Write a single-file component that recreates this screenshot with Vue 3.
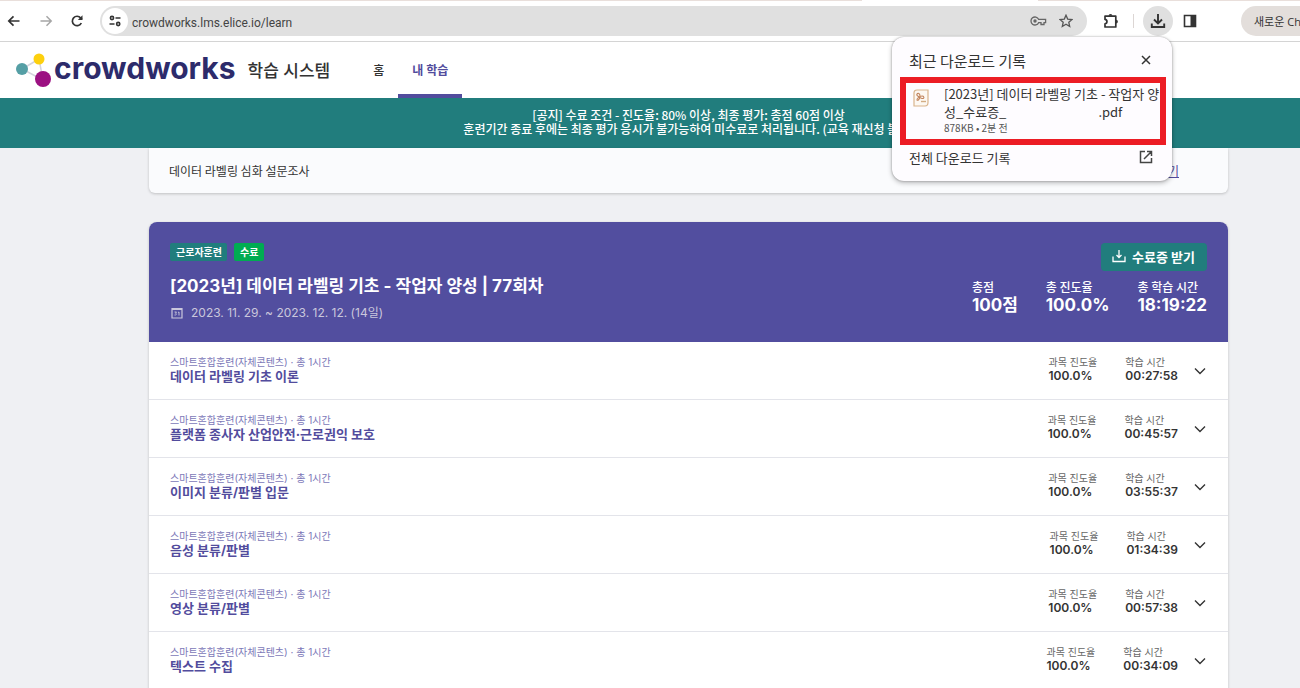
<script setup>
const courses = [
  { title: '데이터 라벨링 기초 이론', time: '00:27:58' },
  { title: '플랫폼 종사자 산업안전·근로권익 보호', time: '00:45:57' },
  { title: '이미지 분류/판별 입문', time: '03:55:37' },
  { title: '음성 분류/판별', time: '01:34:39' },
  { title: '영상 분류/판별', time: '00:57:38' },
  { title: '텍스트 수집', time: '00:34:09' },
]
const totals = [
  { label: '총점', value: '100점' },
  { label: '총 진도율', value: '100.0%' },
  { label: '총 학습 시간', value: '18:19:22' },
]
</script>

<template>
  <div class="window">
    <div class="tabs"><span class="before"></span><span class="active"></span><span class="after"></span></div>
    <div class="toolbar">
      <button class="tool" aria-label="뒤로">
        <svg width="14" height="14" viewBox="0 0 14 14"><path d="M12.500 7H2M6.500 2.300L1.800 7l4.700 4.700" fill="none" stroke="#333" stroke-width="1.700" /></svg>
      </button>
      <button class="tool" aria-label="앞으로">
        <svg width="14" height="14" viewBox="0 0 14 14"><path d="M1.500 7H12M7.500 2.300L12.200 7l-4.700 4.700" fill="none" stroke="#a6a6a6" stroke-width="1.500" /></svg>
      </button>
      <button class="tool" aria-label="새로고침">
        <svg width="14" height="14" viewBox="0 0 14 14"><path d="M11.300 9A4.700 4.700 0 1 1 10.700 4L12 5.300" fill="none" stroke="#333" stroke-width="1.700" /><path d="M12.500 1.300V6H7.800z" fill="#333" /></svg>
      </button>
      <div class="address">
        <button class="site" aria-label="사이트 정보">
          <svg width="14" height="12" viewBox="0 0 14 12"><g fill="none" stroke="#333" stroke-width="1.600"><circle cx="4" cy="3" r="1.600" /><path d="M7.500 3H12.500M1.500 9H6.500" /><circle cx="10.200" cy="9" r="1.600" /></g></svg>
        </button>
        <div class="url-wrap"><input class="url" aria-label="주소" value="crowdworks.lms.elice.io/learn" /></div>
        <button class="mini" aria-label="비밀번호">
          <svg width="17" height="12" viewBox="0 0 17 12"><g fill="none" stroke="#666" stroke-width="1.300"><path d="M8.600 4.300A4 4 0 1 0 8.600 7.700H11V9.500H14V7.700H15.600V4.300z" /></g><circle cx="5" cy="6" r="1.700" fill="#666" /></svg>
        </button>
        <button class="mini" aria-label="북마크">
          <svg width="14" height="14" viewBox="0 0 14 14"><path d="M7 1.200L8.700 5.100L13 5.500L9.800 8.300L10.700 12.500L7 10.300L3.300 12.500L4.200 8.300L1 5.500L5.300 5.100z" fill="none" stroke="#555" stroke-width="1.300" /></svg>
        </button>
      </div>
      <button class="ext" aria-label="확장 프로그램">
        <svg width="16" height="16" viewBox="0 0 16 16"><path d="M2 3.200H12.800V14H2V10.800C4.600 10.500 4.600 6.700 2 6.400z" fill="none" stroke="#333" stroke-width="1.700" stroke-linejoin="round" /><path d="M5.600 2.800a1.900 1.900 0 0 1 3.800 0M13 6.700a1.900 1.900 0 0 1 0 3.800" fill="#333" /></svg>
      </button>
      <span class="divider"></span>
      <button class="download" aria-label="다운로드">
        <svg width="16" height="16" viewBox="0 0 16 16"><path d="M8 1V10M4 6.500L8 10.500L12 6.500M1.800 10.500V14H14.200V10.500" fill="none" stroke="#333" stroke-width="1.900" /></svg>
      </button>
      <button class="side" aria-label="측면 패널">
        <svg width="14" height="14" viewBox="0 0 14 14"><path d="M1.500 1.500H12.500V12.500H1.500z" fill="none" stroke="#333" stroke-width="1.600" /><path d="M7.500 1.500H12.500V12.500H7.500z" fill="#333" /></svg>
      </button>
      <button class="update">새로운 Chrome</button>
    </div>

    <header class="header">
      <a class="brand" href="#">
        <svg width="38" height="38" viewBox="0 0 38 38"><path d="M7 18L24 8L28 29z" fill="none" stroke="#d4d4dc" stroke-width="1.500" /><circle cx="7" cy="18" r="6" fill="#559fa5" /><circle cx="24" cy="8" r="5.500" fill="#fdd00e" /><circle cx="28" cy="28" r="8" fill="#9c1182" /></svg>
        <span class="wordmark">crowdworks</span>
        <span class="system">학습 시스템</span>
      </a>
      <nav class="nav">
        <a href="#">홈</a>
        <a class="on" href="#">내 학습</a>
      </nav>
    </header>

    <div class="notice">
      <p>[공지] 수료 조건 - 진도율: 80% 이상, 최종 평가: 총점 60점 이상</p>
      <p>훈련기간 종료 후에는 최종 평가 응시가 불가능하여 미수료로 처리됩니다. (교육 재신청 불가)</p>
    </div>

    <main class="main">
      <section class="survey">
        <span>데이터 라벨링 심화 설문조사</span>
        <a href="#">참여하기</a>
      </section>

      <section class="card">
        <div class="summary">
          <div>
            <div class="tags"><span class="tag">근로자훈련</span><span class="tag done">수료</span></div>
            <h1>[2023년] 데이터 라벨링 기초 - 작업자 양성 | 77회차</h1>
            <p class="period">
              <svg width="12" height="12" viewBox="0 0 12 12"><path d="M1 1.500H11V11H1zM1 2.500H11" fill="none" stroke="#cac7dc" stroke-width="1.200" /><path d="M3.500 5H5.500L4.500 6.200C6 6.500 5.500 8.500 3.500 8M7 5.500L8 5V8.500" fill="none" stroke="#cac7dc" stroke-width="0.900" /></svg>
              2023. 11. 29. ~ 2023. 12. 12. (14일)
            </p>
          </div>
          <div class="right">
            <button class="cert">
              <svg width="14" height="14" viewBox="0 0 14 14"><path d="M7 1V8.500M4.500 6L7 8.500L9.500 6M1 7.500V12.500H13V7.500" fill="none" stroke="#fff" stroke-width="1.300" /></svg>
              수료증 받기
            </button>
            <dl class="totals">
              <div v-for="t in totals" :key="t.label"><dt>{{ t.label }}</dt><dd>{{ t.value }}</dd></div>
            </dl>
          </div>
        </div>
        <article v-for="c in courses" :key="c.title" class="row">
          <div class="name">
            <p>스마트혼합훈련(자체콘텐츠) · 총 1시간</p>
            <h2>{{ c.title }}</h2>
          </div>
          <dl class="stats">
            <div><dt>과목 진도율</dt><dd>100.0%</dd></div>
            <div><dt>학습 시간</dt><dd>{{ c.time }}</dd></div>
          </dl>
          <button class="expand" aria-label="펼치기">
            <svg width="12" height="8" viewBox="0 0 12 8"><path d="M1 1.500L6 6.500L11 1.500" fill="none" stroke="#333" stroke-width="1.400" /></svg>
          </button>
        </article>
      </section>
    </main>

    <aside class="popup">
      <div class="popup-head">
        <h3>최근 다운로드 기록</h3>
        <button aria-label="닫기">
          <svg width="10" height="10" viewBox="0 0 10 10"><path d="M1 1L9 9M9 1L1 9" stroke="#333" stroke-width="1.500" /></svg>
        </button>
      </div>
      <div class="file">
        <svg width="16" height="18" viewBox="0 0 16 18"><path d="M4 1H15V13.500Q15 17 12 17H1V4Q1 1 4 1z" fill="#fdf8f2" stroke="#d9b48c" stroke-width="1.200" /><path d="M4 5C5 3.500 7 4.500 7 7C7 9.500 5 12 4 11C3.500 9.500 7 7 9 7C11 7 11.500 9 10 9.500C8.500 10 7 8.500 5.500 7.500C4.500 7 3.500 6 4 5z" fill="none" stroke="#c08058" stroke-width="1.100" /><path d="M8 12.500H13" stroke="#d3ad84" stroke-width="1.400" /></svg>
        <div>
          <p>[2023년] 데이터 라벨링 기초 - 작업자 양</p>
          <p class="second"><span>성_수료증_</span><span>.pdf</span></p>
          <p class="meta">878KB • 2분 전</p>
        </div>
      </div>
      <a class="all" href="#">
        전체 다운로드 기록
        <svg width="14" height="14" viewBox="0 0 14 14"><path d="M6 1.500H1.500V12.500H12.500V8M8 1.500H12.500V6M12.500 1.500L5 9" fill="none" stroke="#444" stroke-width="1.500" /></svg>
      </a>
    </aside>
  </div>
</template>

<style>
body { overflow: hidden; }
</style>

<style scoped>
* { box-sizing: border-box; }
p, h1, h2, h3, dl, dd { margin: 0; }
button { padding: 0; border: 0; background: none; font: inherit; color: inherit; display: flex; align-items: center; justify-content: center; flex: none; }
a { text-decoration: none; color: inherit; }
svg { display: block; flex: none; }
.window { position: relative; height: 100vh; overflow: hidden; display: flex; flex-direction: column; background: #eff0f3; font-family: Inter, "Noto Sans CJK KR", sans-serif; color: #333; }

.tabs { flex: none; height: 1px; display: flex; background: #fff; }
.before { flex: 862; background: #e9dfdb; }
.active { flex: 176; }
.after { flex: 262; background: #e9dfdb; }
.toolbar { flex: none; height: 41px; display: flex; align-items: center; border-bottom: 1px solid #d4d4d4; background: #fff; font-family: "Open Sans", "Noto Sans CJK KR", sans-serif; overflow: hidden; }
.tool { width: 14px; height: 28px; margin-left: 7px; margin-right: 10px; }
.tool + .tool { margin-left: 8px; margin-right: 9px; }
.address { flex: 1; height: 30px; margin-left: 7px; padding: 0 14px 0 2px; border-radius: 15px; background: #e0e0e0; display: flex; align-items: center; }
.site { width: 26px; height: 26px; border-radius: 13px; background: #fff; }
.url-wrap { flex: 1; padding-left: 4px; }
.url { width: 100%; padding: 0; border: 0; background: none; font: 12px Roboto, sans-serif; color: #444; outline: 0; }
.mini { margin-left: 12px; }
.ext { margin-left: 16px; }
.divider { width: 1px; height: 14px; margin: 0 9px 0 14px; background: #dcd6d4; }
.download { width: 30px; height: 30px; border-radius: 15px; background: #e0e0e0; }
.side { margin: 0 44px 0 10px; }
.update { width: 59px; height: 30px; padding-left: 13px; border-radius: 15px 0 0 15px; background: #e3dedb; font-size: 11px; justify-content: flex-start; white-space: nowrap; overflow: hidden; }

.header { flex: none; height: 56px; display: flex; background: #fff; }
.brand { display: flex; align-items: center; padding-left: 15px; }
.wordmark { font: 700 30px/36px Inter, sans-serif; color: #2d2b6b; margin-left: 1px; padding-bottom: 4px; }
.system { font-size: 17px; font-weight: 500; margin-left: 12px; padding-bottom: 2px; }
.nav { display: flex; margin-left: 29px; font-size: 12px; font-weight: 500; }
.nav a { display: flex; align-items: center; padding: 3px 14px 0; border-bottom: 4px solid transparent; }
.nav .on { color: #524c9d; border-color: #524c9d; font-weight: 700; }

.notice { flex: none; height: 50px; padding: 10px 0 0 77px; background: #217d7d; color: #fff; font-family: "Noto Sans CJK KR", sans-serif; font-size: 12px; line-height: 14px; font-weight: 500; text-align: center; white-space: nowrap; }

.main { padding: 0 72px 0 149px; }
.survey { height: 45px; padding: 0 49px 0 20px; display: flex; align-items: center; justify-content: space-between; background: #fafbfd; border-radius: 0 0 6px 6px; box-shadow: 0 1px 3px #0003; font-family: "Noto Sans CJK KR", sans-serif; font-size: 12px; }
.survey a { color: #524c9d; text-decoration: underline; }
.card { margin-top: 29px; border-radius: 8px 8px 0 0; background: #fff; box-shadow: 0 1px 3px #0003; overflow: hidden; }
.summary { height: 120px; padding: 21px 21px 0; display: flex; justify-content: space-between; background: #524e9f; color: #fff; }
.tags { display: flex; gap: 7px; }
.tag { height: 18px; padding: 0 5px 0 6px; border-radius: 2px; background: #217d7d; font-size: 10px; line-height: 18px; font-weight: 700; }
.done { padding: 0 6px; background: #00ac52; }
h1 { margin-top: 13px; font-size: 17px; line-height: 24px; font-weight: 700; }
.period { display: flex; align-items: center; gap: 8px; padding-left: 1px; margin-top: 6px; font-size: 12px; line-height: 18px; color: #cac7dc; }
.right { display: flex; flex-direction: column; align-items: flex-end; }
.cert { height: 28px; padding: 0 12px 2px 11px; gap: 6px; border-radius: 4px; background: #217d7d; font-size: 13px; font-weight: 700; }
.totals { display: flex; gap: 28px; margin-top: 8px; }
.totals dt { font-family: "Noto Sans CJK KR", sans-serif; font-size: 12px; line-height: 16px; font-weight: 500; }
.totals dd { font-size: 17px; line-height: 20px; font-weight: 700; }
.row { height: 58px; padding: 0 22px 3px 21px; display: flex; align-items: center; border-bottom: 1px solid #e3e4ea; }
.name { flex: 1; color: #524c9d; }
.name p { font-size: 10px; line-height: 14px; color: #7c78b8; }
h2 { font-size: 13px; line-height: 14px; font-weight: 700; }
.stats { display: flex; gap: 28px; }
.stats dt { font-size: 10px; line-height: 14px; color: #666; }
.stats dd { font-size: 12px; line-height: 14px; font-weight: 600; }
.expand { margin-left: 16px; padding-top: 4px; }

.popup { position: absolute; top: 37px; right: 128px; width: 280px; height: 144px; padding: 0 6px 0 8px; border-radius: 12px; background: #fefcff; box-shadow: 0 0 2px #0005, 0 2px 5px #0004; font-family: "Noto Sans CJK KR", sans-serif; }
.popup-head { height: 40px; padding: 6px 15px 0 9px; display: flex; align-items: center; justify-content: space-between; }
h3 { font-size: 15px; font-weight: 400; }
.file { height: 68px; padding: 2px 0 0 7px; border: 6px solid #ec1c24; display: flex; gap: 15px; font-size: 13px; line-height: 18px; white-space: nowrap; }
.file svg { margin-top: 4px; }
.second { display: flex; gap: 92px; }
.meta { font-size: 10px; line-height: 14px; color: #555; }
.all { height: 24px; padding: 0 13px 0 9px; display: flex; align-items: center; justify-content: space-between; font-size: 13px; }
</style>
